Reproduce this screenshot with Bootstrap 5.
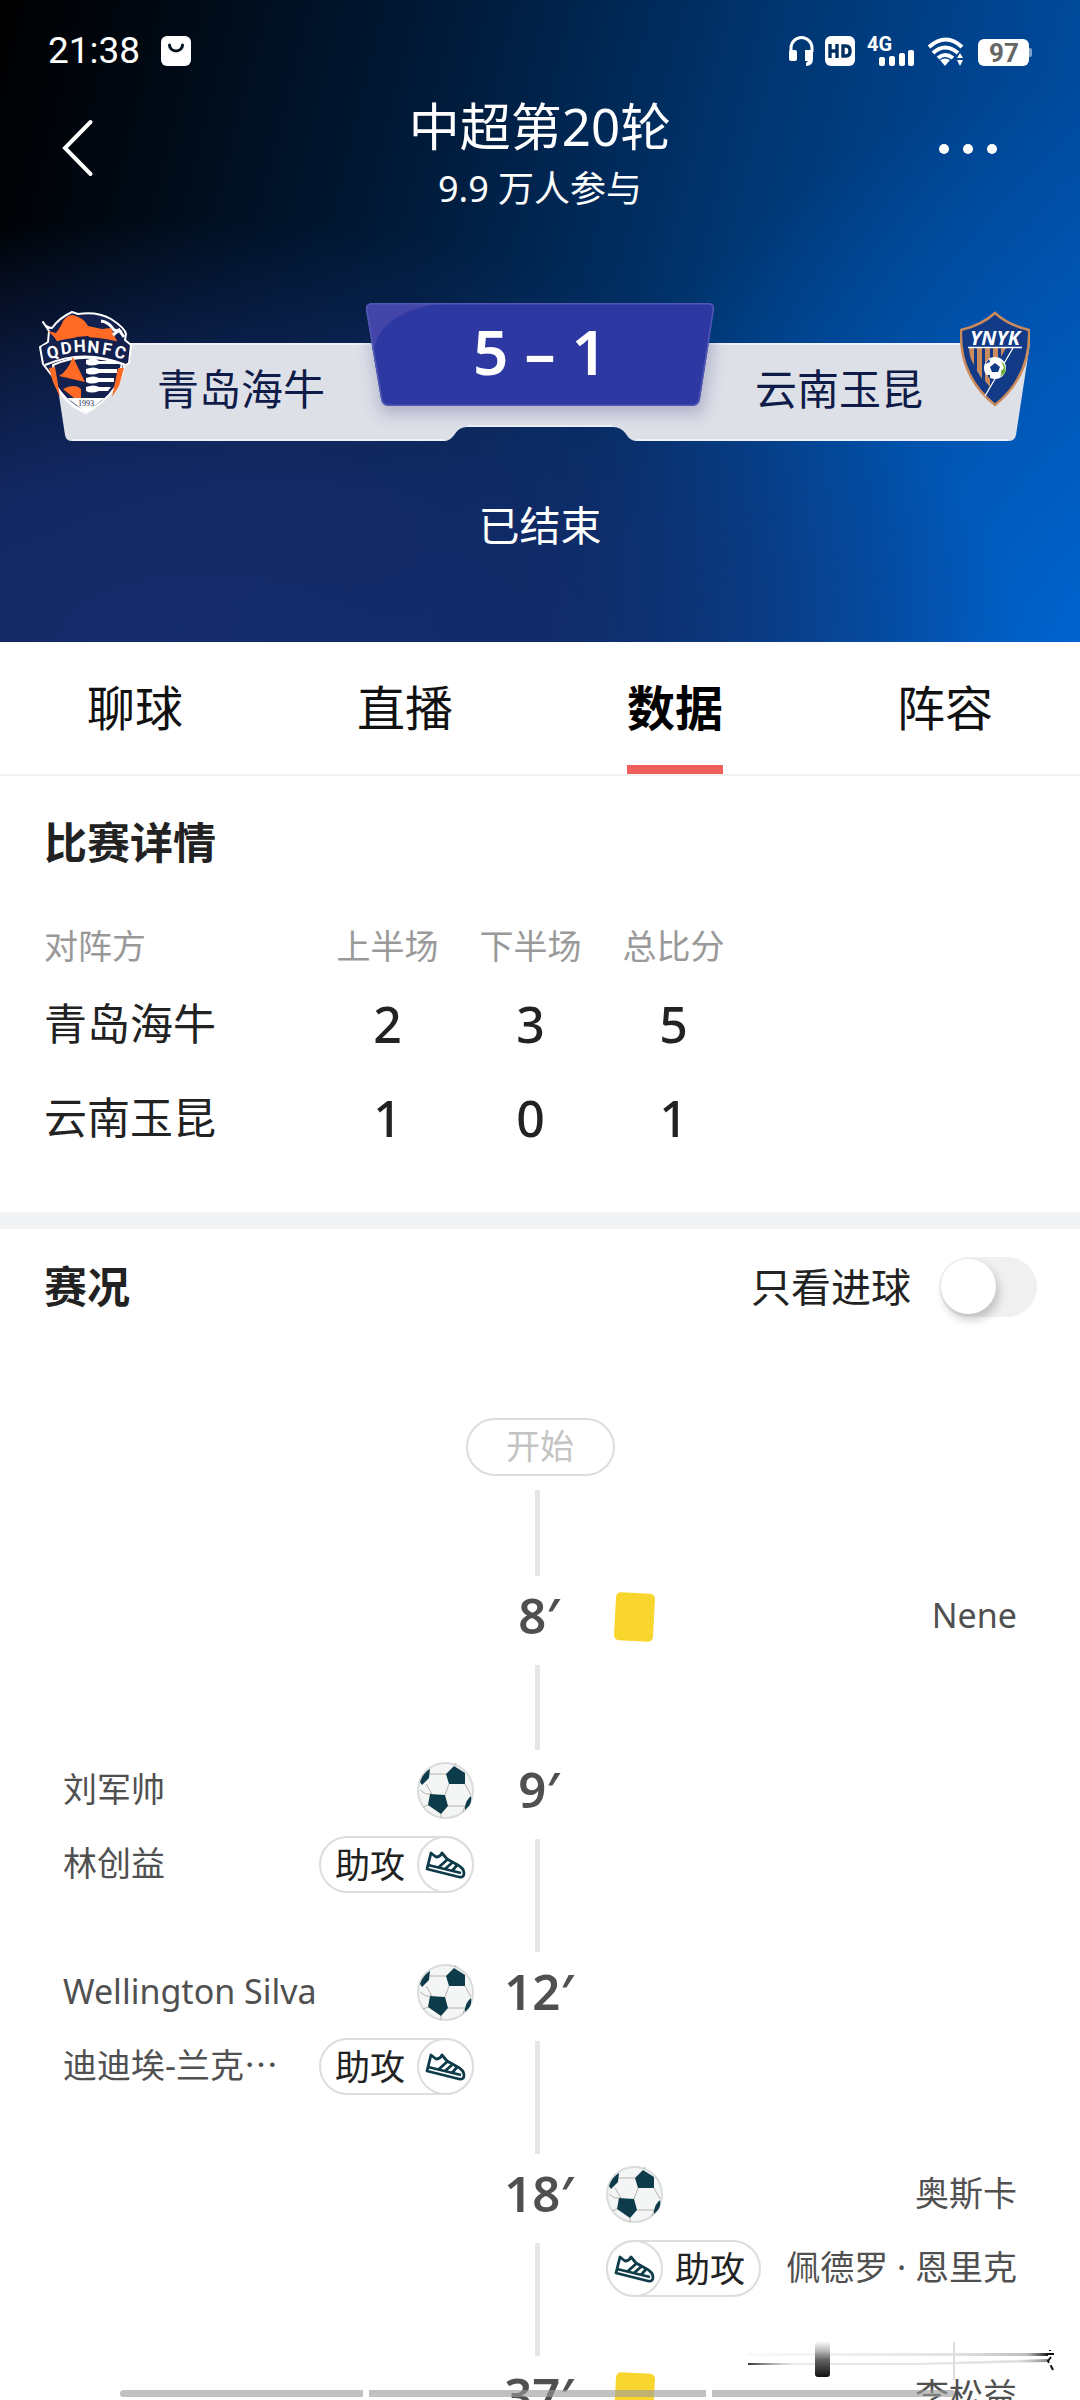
<!DOCTYPE html>
<html lang="zh-CN">
<head>
<meta charset="utf-8">
<meta name="viewport" content="width=device-width, initial-scale=1">
<title>中超第20轮</title>
<link href="https://cdn.jsdelivr.net/npm/bootstrap@5.3.0/dist/css/bootstrap.min.css" rel="stylesheet">
<style>
  body { font-family: "Noto Sans", "Noto Sans CJK SC", sans-serif; color: #222; background: #fff; }
  .app-shell { height: 100vh; overflow: hidden; }
  button { color: inherit; background: none; border: 0; padding: 0; }

  .hero { height: 642px; color: #fff;
    background:
      radial-gradient(ellipse 78% 66% at 16% 100%, #152c6c 0%, #142b6ae6 40%, #142b6a80 70%, #142b6a00 100%),
      radial-gradient(ellipse 55% 95% at 106% 106%, #0066d4 0%, #0062ccb0 35%, #0062cc00 100%),
      linear-gradient(104deg, #000 0%, #000914 14%, #001d3f 40%, #003672 64%, #004592 82%, #0052ae 100%); }
  .status-bar { height: 102px; padding: 0 48px; }
  .clock { font-family: Roboto, sans-serif; font-size: 37px; line-height: 38px; }
  .clock-group { gap: 21px; }
  .title-bar { height: 193px; padding: 0 60px; }
  .round-name { font-size: 51px; line-height: 48px; font-weight: 400; }
  .viewers { font-size: 36px; line-height: 48px; margin-top: 15px; }
  .side-slot { width: 140px; height: 92px; }
  .side-slot-end { padding-right: 18px; }

  .board { height: 160px; }
  .board-plate { position: absolute; inset: 0; width: 100%; height: 100%; }
  .board-row { position: relative; height: 100%; }
  .score-box { flex: none; width: 348px; font-size: 62px; line-height: 64px; font-weight: 600; padding-top: 24px; }
  .team { flex: none; width: calc(50% - 174px); color: #101c48; padding-top: 16px; }
  .team-home { padding-left: 38px; }
  .team-away { padding-right: 50px; }
  .team-label { font-size: 42px; line-height: 60px; padding-top: 48px; white-space: nowrap; }
  .team-home .team-label { margin-left: 25px; }
  .team-away .team-label { margin-right: 37px; }
  .match-state { font-size: 41px; line-height: 60px; padding-top: 40px; }

  .tab-strip { height: 134px; border-bottom: 2px solid #f1f1f1; }
  .tab-strip a { color: #111; text-decoration: none; font-size: 48px; line-height: 132px; }
  .tab-strip a span { display: inline-block; height: 132px; border-bottom: 9px solid transparent; }
  .tab-strip a.active span { font-weight: 700; color: #000; border-color: #f05f5c; }

  .block-title { font-size: 43px; line-height: 60px; font-weight: 700; margin: 0; }
  .detail { padding: 37px 44px 47px; }
  .periods { margin-top: 42px; table-layout: fixed; width: 701px; border-collapse: collapse; }
  .periods th, .periods td { padding: 0; text-align: center; }
  .periods th:first-child { text-align: left; width: 272px; }
  .periods thead th { height: 62px; font-size: 34px; line-height: 48px; font-weight: 400; color: #999; }
  .periods tbody th { height: 94px; font-size: 43px; line-height: 60px; font-weight: 400; }
  .periods td { font-size: 50px; line-height: 60px; font-weight: 500; }
  .divider-band { height: 17px; background: #f2f3f5; }

  .feed-head { height: 116px; padding: 0 43px 0 44px; }
  .only-goals { font-size: 40px; line-height: 60px; margin-right: 28px; }
  .goal-switch { appearance: none; position: relative; width: 98px; height: 60px; margin: 0; border-radius: 30px; background: #f0f0f0; }
  .goal-switch::before { content: ""; position: absolute; left: 2px; top: 2px; width: 55px; height: 55px; border-radius: 50%; background: #fff; box-shadow: 3px 6px 10px #0003; }
  .goal-switch:checked { background: #f05f5c; }
  .goal-switch:checked::before { left: 41px; }

  .timeline { padding: 73px 63px 0; color: #505050; }
  .start-pill { width: 149px; height: 58px; border: 2px solid #ddd; border-radius: 29px; font-size: 34px; line-height: 52px; color: #c4c4c4; }
  .rail { width: 5px; background: #e6e6e6; margin-right: 5px; }
  .rail-start { height: 86px; margin-top: 14px; margin-bottom: 12px; }
  .event { min-height: 174px; }
  .event .minute { width: 132px; }
  .minute span { font-size: 49px; line-height: 55px; height: 57px; font-weight: 600; margin-right: 2px; }
  .minute .rail { margin-top: 20px; margin-bottom: 12px; flex: 1; }
  .event-side { flex: 1 1 0; min-width: 0; padding-bottom: 71px; gap: 17px; }
  .event-line { height: 57px; font-size: 34px; line-height: 55px; }
  .event-line > span { padding-bottom: 2px; }
  .event-line svg { flex: none; }
  .assist { flex: none; width: 155px; height: 57px; border: 2px solid #ddd; border-radius: 29px; font-size: 35px; line-height: 53px; color: #222; }
  .assist span { padding: 0 14px; }
  .assist svg { margin: -2px; }
  .card-slot { width: 57px; display: flex; justify-content: center; flex: none; }
  .booking { width: 39px; height: 48px; border-radius: 5px; background: #f9d62e; transform: rotate(3deg); }

  .home-bar { position: fixed; left: 120px; right: 125px; bottom: 3px; height: 7px; gap: 6px; }
  .home-bar i { flex: 1; background: #9999999c; }
  .home-bar i:nth-child(2) { flex: 1.39; }
  .home-bar i:first-child { border-radius: 4px 0 0 4px; }
  .home-bar i:last-child { border-radius: 0 4px 4px 0; }
  .smudge { position: fixed; right: 24px; bottom: 19px; }
</style>
</head>
<body>
<svg width="0" height="0" class="position-absolute" aria-hidden="true">
  <symbol id="ball" viewBox="0 0 57 57">
    <circle cx="28.5" cy="28.5" r="27.5" fill="#f4f6f6" stroke="#d9dcdc" stroke-width="2"/>
    <path d="M13 12H29M9 22l6 10M32 22l-4 11M48 22l6 11M31 44h17M15 32H9L3 28M48 44l-2 6M24 52v4M11 43l-5 2M38 3l1-2" fill="none" stroke="#b5b3a8"/>
    <path d="M37 4l11 7v11H32l-3-10zM13 32l15 1 3 11-7 8-13-9zM3 20q3-9 10-13l-1 9-7 7zM48 45q1-7 6-11 1 6-2 10l-4 4z" fill="#0e3b4a"/>
  </symbol>
  <symbol id="boot" viewBox="0 0 57 57">
    <circle cx="28.5" cy="28.5" r="27.5" fill="#fff" stroke="#ddd" stroke-width="2"/>
    <g fill="none" stroke="#0e3b4a" stroke-width="2.8" stroke-linejoin="round">
      <path d="M14 17l5 4q4 0 6-4l5 6 9 5q8 4 8 9 0 5-5 4L10 33z"/>
      <path d="M11 29l33 8M31 23l-9 8M36 26l-8 7M41 28l-6 7"/>
    </g>
  </symbol>
</svg>

<div class="app-shell">
  <header class="hero">
    <div class="status-bar d-flex justify-content-between align-items-center">
      <div class="clock-group d-flex align-items-center">
        <span class="clock">21:38</span>
        <svg width="30" height="30" viewBox="0 0 30 30"><rect width="30" height="30" rx="6" fill="#fff"/><path d="M8.500 9a6.500 6 0 0 0 13 0" fill="none" stroke="#00101c" stroke-width="3" stroke-linecap="round"/></svg>
      </div>
      <svg width="244" height="52" viewBox="788 25 244 52" fill="#fff">
        <path d="M791 52v-4a10.500 10.500 0 0 1 21 0v4" fill="none" stroke="#fff" stroke-width="3"/>
        <rect x="789" y="50" width="8" height="11" rx="2"/><path d="M805 50h8v9q0 7-7 7v-3l2-2h-3z"/>
        <rect x="825" y="36" width="30" height="30" rx="6"/>
        <path d="M830 44v14M837 44v14M830 51h7M843 46v10h3q4 0 4-5t-4-5z" fill="none" stroke="#00305f" stroke-width="3.400"/>
        <text x="867" y="51" font-family="Roboto" font-weight="700" font-size="20">4G</text>
        <rect x="879" y="57" width="6" height="9" rx="2"/><rect x="889" y="56" width="6" height="10" rx="2"/><rect x="899" y="53" width="6" height="13" rx="2"/><rect x="908" y="50" width="6" height="16" rx="2"/>
        <path d="M929 47q17-15 33 0M933 53q12-11 25 0M938 58q7-6 15 0" fill="none" stroke="#fff" stroke-width="4"/>
        <path d="M940 60q5-3 10 0l-5 6zM957 58l3-5 3 5zM957 60h6l-3 6z"/>
        <rect x="978" y="39" width="51" height="27" rx="6"/><path d="M1029 48h1q2 0 2 2v5q0 2-2 2h-1z" opacity=".5"/>
        <text x="1004" y="62" text-anchor="middle" font-family="Roboto" font-weight="700" font-size="26" fill="#666">97</text>
      </svg>
    </div>
    <div class="title-bar d-flex justify-content-between align-items-start">
      <div class="side-slot d-flex align-items-center">
        <button type="button" aria-label="返回" class="d-flex"><svg width="34" height="60" viewBox="0 0 34 60"><path d="M30.500 4L5 30l25.500 26" fill="none" stroke="#fff" stroke-width="4" stroke-linecap="round"/></svg></button>
      </div>
      <div class="text-center">
        <h1 class="round-name m-0">中超第20轮</h1>
        <div class="viewers">9.9 万人参与</div>
      </div>
      <div class="side-slot side-slot-end d-flex align-items-center justify-content-end">
        <button type="button" aria-label="更多" class="d-flex"><svg width="64" height="20" viewBox="0 0 64 20" fill="#fff"><circle cx="6" cy="11" r="5"/><circle cx="30" cy="11" r="5"/><circle cx="54" cy="11" r="5"/></svg></button>
      </div>
    </div>

    <div class="board position-relative">
      <svg class="board-plate" viewBox="0 295 1080 160" preserveAspectRatio="none">
        <defs>
          <filter id="soft" x="-10%" y="-20%" width="120%" height="150%"><feGaussianBlur stdDeviation="8"/></filter>
          <clipPath id="greyClip"><path d="M51 343H1030L1016 435q-1 6-8 6H636q-6 0-10-7-5-7-13-7H467q-8 0-12 7-5 7-10 7H72q-6 0-7-6z"/></clipPath>
          <clipPath id="plateClip"><path d="M373 303H708q7 0 6 7L700 399q-1 7-8 7H389q-7 0-8-7L366 310q-1-7 7-7z"/></clipPath>
        </defs>
        <path d="M51 343H1030L1016 435q-1 6-8 6H636q-6 0-10-7-5-7-13-7H467q-8 0-12 7-5 7-10 7H72q-6 0-7-6z" fill="#dee0e8"/>
        <path d="M51 344H1030M72 440H445M467 426H613M636 440H1008" stroke="#eef1f8" stroke-width="2"/>
        <g clip-path="url(#greyClip)"><path d="M366 310H718L703 414H381z" fill="#8f93b4" opacity=".6" filter="url(#soft)"/></g>
        <g clip-path="url(#plateClip)">
          <rect x="360" y="300" width="360" height="110" fill="#2e38a2"/>
          <path d="M360 300H470Q385 305 375 345L370 360z" fill="#4445a8"/>
          <path d="M373 303H708q7 0 6 7L700 399q-1 7-8 7H389q-7 0-8-7L366 310q-1-7 7-7z" fill="none" stroke="#5058b4" stroke-width="3"/>
        </g>
      </svg>
      <div class="board-row d-flex align-items-start">
        <div class="team team-home d-flex align-items-start">
          <svg width="94" height="104" viewBox="-1 0 94 104" class="flex-shrink-0" role="img" aria-label="QDHNFC">
            <path d="M4 11q3 6 9 6Q20 7 33 1l6 2Q58 0 72 8q14 9 15 15l-1 6 6 5-2 18-5 3q-4 26-38 47Q22 92 14 66L4 53 1 36l8-5 1-11z" fill="#14214f" stroke="#fff" stroke-width="2" stroke-linejoin="round"/>
            <path d="M9 20l8 2q6-8 7-12 5-7 10-6l5 2q6 2 10 9l14 3 9-1 4 9 3 6 2 8-10-4-8-2-1-6q-8 1-13-3l-12 1-7 12-10-2q-2-8-8-13z" fill="#ff6a24"/>
            <path d="M62 10q8 1 13 9l8 2M74 24l6-5 5 7" fill="none" stroke="#fff" stroke-width="3"/>
            <path d="M3 35Q45 18 90 34L87 53Q45 36 6 53z" fill="#14214f"/>
            <path d="M6 54Q45 37 87 54" stroke="#fff" stroke-width="2" fill="none"/>
            <path d="M14 54l4 22q14 20 29 24 17-6 30-25l6-22Q45 40 14 54z" fill="#14214f" stroke="#fff" stroke-width="2"/>
            <path d="M10 57l4 14 7 15-5-30zM85 57l-5 18-7 11 6-29z" fill="#ff6a24"/>
            <path d="M34 46l12 25-26-6q8-4 14-19zM24 78q12-6 18 0v9h-7z" fill="#ff6a24"/>
            <path d="M47 49q10-3 13 1h19v3H60q-9 3-13 0zM47 58q8-3 13 0h18v4H60q-8 3-13 0zM47 67q8-3 13 0h15v4H60q-8 3-13 0zM47 76q8-3 13 0h12l-3 4H60q-8 3-13 0z" fill="#fff"/>
            <path d="M28 87h38L47 101z" fill="#fff"/>
            <text x="47" y="95" text-anchor="middle" font-family="Liberation Serif" font-size="8" fill="#14214f">1993</text>
            <g font-family="Roboto" font-size="17" font-weight="700" fill="#fff" text-anchor="middle">
              <text transform="translate(15 47) rotate(-13)">Q</text><text transform="translate(28 43) rotate(-8)">D</text><text transform="translate(41 41) rotate(-3)">H</text><text transform="translate(54 42) rotate(4)">N</text><text transform="translate(67 44) rotate(9)">F</text><text transform="translate(80 47) rotate(14)">C</text>
            </g>
          </svg>
          <div class="team-label">青岛海牛</div>
        </div>
        <div class="score-box text-center">5 – 1</div>
        <div class="team team-away d-flex align-items-start justify-content-end">
          <div class="team-label">云南玉昆</div>
          <svg width="70" height="96" viewBox="0 -1 70 96" class="flex-shrink-0" role="img" aria-label="YNYK">
            <path d="M35 1Q22 13 1 18q-2 46 34 75Q71 64 69 18 48 13 35 1z" fill="#123a86" stroke="#c98a5c" stroke-width="2.500"/>
            <path d="M9 36h5v17q-5-8-5-17zM17 36h5v31l-5-8zM25 36h5v39l-5-6zM33 36h5v15h-5zM41 36h5l-5 9z" fill="#c98a5c"/>
            <path d="M8 35.500h54M53 36L25 84" stroke="#fff" stroke-width="1.300"/>
            <circle cx="35" cy="56" r="11" fill="#fff"/>
            <path d="M35 51l5 4-2 5h-6l-2-5zM25 52l4-5 1 3zM27 63l3 4 0-4z" fill="#123a86"/><path d="M41 49q6 5 4 12l-5 4q2-3 1-6l3-3z" fill="#6fae3c"/>
            <text x="35" y="33" text-anchor="middle" font-family="Noto Sans" font-weight="700" font-style="italic" font-size="20" fill="#fff">YNYK</text>
          </svg>
        </div>
      </div>
    </div>
    <div class="match-state text-center">已结束</div>
  </header>

  <nav class="tab-strip d-flex text-center">
    <a href="#chat" class="flex-fill"><span>聊球</span></a>
    <a href="#live" class="flex-fill"><span>直播</span></a>
    <a href="#data" class="flex-fill active" aria-current="page"><span>数据</span></a>
    <a href="#lineup" class="flex-fill"><span>阵容</span></a>
  </nav>

  <main>
    <section class="detail">
      <h2 class="block-title">比赛详情</h2>
      <table class="periods">
        <thead><tr><th scope="col">对阵方</th><th scope="col">上半场</th><th scope="col">下半场</th><th scope="col">总比分</th></tr></thead>
        <tbody>
          <tr><th scope="row">青岛海牛</th><td>2</td><td>3</td><td>5</td></tr>
          <tr><th scope="row">云南玉昆</th><td>1</td><td>0</td><td>1</td></tr>
        </tbody>
      </table>
    </section>
    <div class="divider-band"></div>
    <section>
      <div class="feed-head d-flex justify-content-between align-items-center">
        <h2 class="block-title">赛况</h2>
        <div class="d-flex align-items-center">
          <label class="only-goals" for="onlyGoals">只看进球</label>
          <input class="goal-switch" type="checkbox" role="switch" id="onlyGoals">
        </div>
      </div>
      <div class="timeline">
        <div class="d-flex flex-column align-items-center">
          <div class="start-pill text-center">开始</div>
          <div class="rail rail-start"></div>
        </div>

        <div class="event d-flex">
          <div class="event-side"></div>
          <div class="minute d-flex flex-column align-items-center"><span>8′</span><div class="rail"></div></div>
          <div class="event-side d-flex flex-column">
            <div class="event-line d-flex justify-content-between align-items-center"><div class="card-slot"><div class="booking"></div></div><span>Nene</span></div>
          </div>
        </div>

        <div class="event d-flex">
          <div class="event-side d-flex flex-column">
            <div class="event-line d-flex justify-content-between align-items-center"><span>刘军帅</span><svg width="57" height="57"><use href="#ball"/></svg></div>
            <div class="event-line d-flex justify-content-between align-items-center"><span>林创益</span><div class="assist d-flex justify-content-between"><span>助攻</span><svg width="57" height="57"><use href="#boot"/></svg></div></div>
          </div>
          <div class="minute d-flex flex-column align-items-center"><span>9′</span><div class="rail"></div></div>
          <div class="event-side"></div>
        </div>

        <div class="event d-flex">
          <div class="event-side d-flex flex-column">
            <div class="event-line d-flex justify-content-between align-items-center"><span>Wellington Silva</span><svg width="57" height="57"><use href="#ball"/></svg></div>
            <div class="event-line d-flex justify-content-between align-items-center"><span>迪迪埃-兰克⋯</span><div class="assist d-flex justify-content-between"><span>助攻</span><svg width="57" height="57"><use href="#boot"/></svg></div></div>
          </div>
          <div class="minute d-flex flex-column align-items-center"><span>12′</span><div class="rail"></div></div>
          <div class="event-side"></div>
        </div>

        <div class="event d-flex">
          <div class="event-side"></div>
          <div class="minute d-flex flex-column align-items-center"><span>18′</span><div class="rail"></div></div>
          <div class="event-side d-flex flex-column">
            <div class="event-line d-flex justify-content-between align-items-center"><svg width="57" height="57"><use href="#ball"/></svg><span>奥斯卡</span></div>
            <div class="event-line d-flex justify-content-between align-items-center"><div class="assist d-flex justify-content-between"><svg width="57" height="57"><use href="#boot"/></svg><span>助攻</span></div><span>佩德罗 · 恩里克</span></div>
          </div>
        </div>

        <div class="event d-flex">
          <div class="event-side"></div>
          <div class="minute d-flex flex-column align-items-center"><span>37′</span><div class="rail"></div></div>
          <div class="event-side d-flex flex-column">
            <div class="event-line d-flex justify-content-between align-items-center"><div class="card-slot"><div class="booking"></div></div><span>李松益</span></div>
          </div>
        </div>
      </div>
    </section>
  </main>
</div>

<svg class="smudge" width="312" height="42" viewBox="745 2340 312 42" aria-hidden="true">
  <defs>
    <linearGradient id="fadeR"><stop offset="0" stop-color="#999" stop-opacity=".05"/><stop offset=".7" stop-color="#888" stop-opacity=".25"/><stop offset=".93" stop-color="#777" stop-opacity=".5"/><stop offset="1" stop-color="#111"/></linearGradient>
    <linearGradient id="fadeL"><stop offset="0" stop-color="#333"/><stop offset=".15" stop-color="#999" stop-opacity=".2"/><stop offset=".9" stop-color="#999" stop-opacity=".3"/><stop offset="1" stop-color="#555" stop-opacity=".7"/></linearGradient>
    <linearGradient id="fadeD" x2="0" y2="1"><stop offset="0" stop-color="#999" stop-opacity=".1"/><stop offset=".5" stop-color="#666"/><stop offset="1" stop-color="#111"/></linearGradient>
  </defs>
  <rect x="749" y="2354" width="300" height="3" fill="url(#fadeR)"/>
  <path d="M749 2364h170l130-4v3l-130 3H749z" fill="url(#fadeL)"/>
  <rect x="816" y="2343" width="15" height="35" rx="3" fill="url(#fadeD)"/>
  <rect x="954" y="2343" width="2" height="38" fill="#ddd"/>
  <path d="M1048 2355h7M1051 2351v1M1052 2358l-3 4 3 5 2 4" stroke="#111" stroke-width="2" fill="none" stroke-dasharray="7 3"/>
</svg>
<div class="home-bar d-flex"><i></i><i></i><i></i></div>
<script src="https://cdn.jsdelivr.net/npm/bootstrap@5.3.0/dist/js/bootstrap.bundle.min.js"></script>
</body>
</html>
